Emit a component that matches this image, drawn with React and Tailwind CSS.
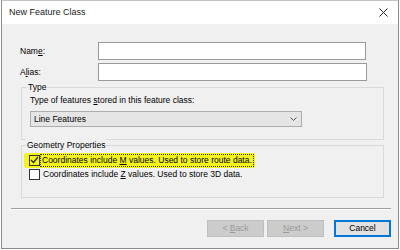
import React from 'react';

// "New Feature Class" wizard dialog, first page
function Ul({ children }) {
  return <span className="underline underline-offset-[1px]">{children}</span>;
}

function Group({ label, className, children }) {
  return (
    <div className={`relative ml-[19px] w-[363px] border border-[#dadada] ${className}`}>
      <span className="absolute top-[-7px] bg-[#f0f0f0] px-px leading-[12px] text-black" style={{ left: label === 'Type' ? 5 : 4 }}>
        {label}
      </span>
      {children}
    </div>
  );
}

export default function App() {
  return (
    <div className="w-[400px] h-[250px] bg-white pl-px pr-px pb-px font-['Liberation_Sans',Arial,sans-serif] text-[8.5px] text-black">
      <div className="h-full flex flex-col border border-[#8a8a8a] border-t-[#c4c4c4]">
        {/* Title bar */}
        <div className="h-[23px] shrink-0 bg-white flex items-center justify-between pl-[7px] pr-[10px]">
          <span className="text-[9px] text-[#1a1a1a]">New Feature Class</span>
          <svg width="9" height="9" viewBox="0 0 9 9" className="block">
            <path d="M0.5 0.5 L8.5 8.5 M8.5 0.5 L0.5 8.5" stroke="#222" strokeWidth="1" fill="none" />
          </svg>
        </div>

        {/* Body */}
        <div className="flex-1 bg-[#f0f0f0] pt-[18px]">
          <div className="flex items-center h-[18px] pl-[18px]">
            <span className="w-[78px]">Nam<Ul>e</Ul>:</span>
            <div className="w-[268px] h-[18px] bg-white border border-[#9a9a9a]" />
          </div>
          <div className="flex items-center h-[18px] pl-[18px] mt-[3px]">
            <span className="w-[78px]">A<Ul>l</Ul>ias:</span>
            <div className="w-[269px] h-[18px] bg-white border border-[#9a9a9a]" />
          </div>

          <Group label="Type" className="mt-[6px] pt-[6px] pb-[12px] pl-[8px]">
            <div className="leading-[12px]">
              Type of features <Ul>s</Ul>tored in this feature class:
            </div>
            <div className="mt-[5px] w-[272px] h-[16px] bg-[#e5e5e5] border border-[#adadad] flex items-center justify-between pl-[3px] pr-[4px]">
              <span>Line Features</span>
              <svg width="7" height="4" viewBox="0 0 7 4" className="block">
                <path d="M0.5 0.5 L3.5 3.5 L6.5 0.5" stroke="#555" strokeWidth="1" fill="none" />
              </svg>
            </div>
          </Group>

          <Group label="Geometry Properties" className="mt-[5px] pt-[8px] pb-[17px] pl-[7px]">
            <div className="flex items-center h-[12px]">
              <div className="flex items-center -ml-[5px] pl-[5px] pr-[2px] py-[2px] -my-[2px] bg-[#f4f41c] rounded-[2px]">
                <div className="w-[11px] h-[11px] border border-[#333] flex items-center justify-center">
                  <svg width="9" height="8" viewBox="0 0 9 8" className="block">
                    <path d="M1 4 L3.5 6.5 L8 1" stroke="#222" strokeWidth="1.2" fill="none" />
                  </svg>
                </div>
                <span className="ml-px px-px leading-[11px] outline outline-1 outline-dotted outline-[#333]">
                  Coordinates include <Ul>M</Ul> values. Used to store route data.
                </span>
              </div>
            </div>
            <div className="flex items-center h-[12px] mt-[2px]">
              <div className="w-[11px] h-[11px] bg-white border border-[#333]" />
              <span className="ml-[2px] px-px">
                Coordinates include <Ul>Z</Ul> values. Used to store 3D data.
              </span>
            </div>
          </Group>

          <div className="mt-[10px] ml-[9px] w-[380px] h-[2px] border-t border-t-[#a0a0a0] border-b border-b-white" />

          <div className="mt-[10px] flex justify-end pr-[7px]">
            <div className="w-[57px] h-[17px] bg-[#cccccc] border border-[#bfbfbf] text-[#9a9a9a] flex items-center justify-center">
              <span>&lt; <Ul>B</Ul>ack</span>
            </div>
            <div className="ml-[3px] w-[57px] h-[17px] bg-[#cccccc] border border-[#bfbfbf] text-[#9a9a9a] flex items-center justify-center">
              <span><Ul>N</Ul>ext &gt;</span>
            </div>
            <div className="ml-[10px] w-[57px] h-[17px] bg-[#e1e1e1] border-2 border-[#0078d7] flex items-center justify-center">
              <span>Cancel</span>
            </div>
          </div>
        </div>
      </div>
    </div>
  );
}
